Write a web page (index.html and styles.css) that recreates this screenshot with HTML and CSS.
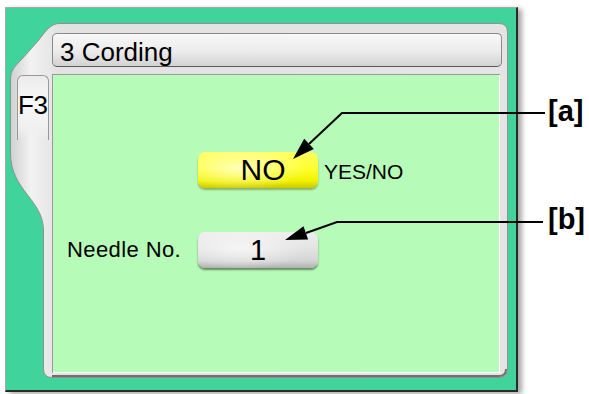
FILE: index.html
```html
<!DOCTYPE html>
<html>
<head>
<meta charset="utf-8">
<link rel="stylesheet" href="styles.css">
</head>
<body>
<div class="stage">
  <div class="panel">
    <div class="frame">
      <div class="side"><div class="tab">F3</div></div>
      <div class="main">
        <div class="title">3 Cording</div>
        <div class="content">
          <div class="grid">
            <span></span>
            <div class="btn btn-yellow"><span class="btn-no">NO</span></div>
            <span class="hint">YES/NO</span>
            <span class="label">Needle No.</span>
            <div class="btn btn-gray">1</div>
            <span></span>
          </div>
        </div>
      </div>
    </div>
  </div>
  <svg class="leaders" width="589" height="394" viewBox="0 0 589 394">
    <polyline points="545,113 342,113 309,144" fill="none" stroke="#000" stroke-width="2"/>
    <polygon points="293,159 313.8,149 304.2,138.8" fill="#000"/>
    <polyline points="543,222 337,222 306,233" fill="none" stroke="#000" stroke-width="2"/>
    <polygon points="285,240 308.1,239.4 303.5,226.2" fill="#000"/>
  </svg>
  <span class="callout callout-a">[a]</span>
  <span class="callout callout-b">[b]</span>
</div>
</body>
</html>
```
FILE: styles.css
```css
* { box-sizing: border-box; }
html, body { margin: 0; padding: 0; background: #fff; }
body { font-family: "Liberation Sans", Arial, sans-serif; color: #000; }

.stage {
  position: relative;
  width: 589px;
  height: 394px;
  overflow: hidden;
}

.panel {
  margin: 7px 0 0 5px;
  width: 513px;
  height: 385px;
  background: #40d39b;
  border-top: 1px solid #a8a8a8;
  border-left: 1px solid #a8a8a8;
  border-right: 2px solid #2a2a2a;
  border-bottom: 2px solid #2a2a2a;
  box-shadow: 4px 2px 5px rgba(0,0,0,0.35);
  padding: 15px 8px 12px 4px;
}

.frame {
  display: flex;
  width: 498px;
  height: 355px;
  background: url("data:image/svg+xml;utf8,<svg xmlns='http://www.w3.org/2000/svg' width='498' height='355' viewBox='0 0 498 355'><defs><linearGradient id='h' x1='0' y1='0' x2='1' y2='0'><stop offset='0' stop-color='%23d0d0d0'/><stop offset='0.04' stop-color='%23f2f2f2'/><stop offset='0.1' stop-color='%23e2e2e2'/><stop offset='1' stop-color='%23e4e4e4'/></linearGradient></defs><path d='M50 0.5 H489 Q497.5 0.5 497.5 9 V346 Q497.5 354.5 489 354.5 H42 Q33.5 354.5 33.5 346 V208 C33.5 176 0.5 168 0.5 130 V56 C0.5 48 4 44 12 36 L28 18 C36 8 40 0.5 50 0.5 Z' fill='url(%23h)' stroke='%23909090' stroke-width='1'/><path d='M42 353 H489 Q496 353 496 346' fill='none' stroke='%23707070' stroke-width='2'/></svg>") no-repeat;
}

.side {
  width: 42px;
  flex: none;
  padding: 52px 0 0 7px;
}

.tab {
  width: 32px;
  height: 65px;
  border: 1px solid #9a9a9a;
  border-bottom: none;
  border-radius: 6px 6px 0 0;
  background: linear-gradient(to bottom, #ececec 0%, #f7f7f7 40%, #f0f0f0 80%, rgba(240,240,240,0) 100%);
  font-size: 26px;
  line-height: 30px;
  padding: 14px 0 0 0;
  letter-spacing: -0.5px;
}

.main {
  flex: 1;
  padding-top: 10px;
}

.title {
  width: 450px;
  height: 34px;
  border: 1px solid #8a8a8a;
  border-bottom-color: #5a5a5a;
  border-radius: 5px;
  background: linear-gradient(to bottom, #f8f8f8 0%, #ebebeb 55%, #d2d2d2 100%);
  font-size: 26px;
  line-height: 32px;
  padding: 2px 0 0 7px;
  margin-bottom: 7px;
}

.content {
  width: 448px;
  height: 299px;
  background: #b6fcb8;
  box-shadow: inset 1px 1px 0 #9a9a9a, inset -1px -1px 0 #ffffff;
  padding-top: 78px;
}

.grid {
  display: grid;
  grid-template-columns: 146px 120px auto;
  grid-template-rows: 36px 36px;
  row-gap: 44px;
  align-items: center;
}

.btn {
  height: 36px;
  border-radius: 7px;
  display: flex;
  align-items: center;
  justify-content: center;
}

.btn-yellow {
  background:
    radial-gradient(ellipse 55% 60% at 35% 45%, rgba(255,255,200,0.9) 0%, rgba(255,255,120,0) 100%),
    linear-gradient(to bottom, #ffff60 0%, #ffff30 45%, #f2f200 80%, #c9c900 100%);
  box-shadow: 0 2px 2px rgba(90,90,0,0.45);
  font-size: 30px;
  padding-left: 10px;
}

.btn-gray {
  background:
    radial-gradient(ellipse 55% 60% at 35% 45%, rgba(250,250,250,0.8) 0%, rgba(250,250,250,0) 100%),
    linear-gradient(to bottom, #eeeeee 0%, #e2e2e2 50%, #d4d4d4 80%, #b0b0b0 100%);
  box-shadow: 0 2px 2px rgba(0,0,0,0.45);
  font-size: 29px;
}

.hint {
  margin-left: 6px;
  font-size: 21px;
  padding-top: 3px;
}

.label {
  padding-left: 15px;
  font-size: 22px;
  letter-spacing: 0.4px;
}

.leaders {
  position: absolute;
  left: 0;
  top: 0;
  pointer-events: none;
}

.callout {
  position: absolute;
  left: 548px;
  font-size: 29px;
  line-height: 28px;
  font-weight: bold;
}
.callout-a { top: 97px; }
.callout-b { top: 205px; }
```
